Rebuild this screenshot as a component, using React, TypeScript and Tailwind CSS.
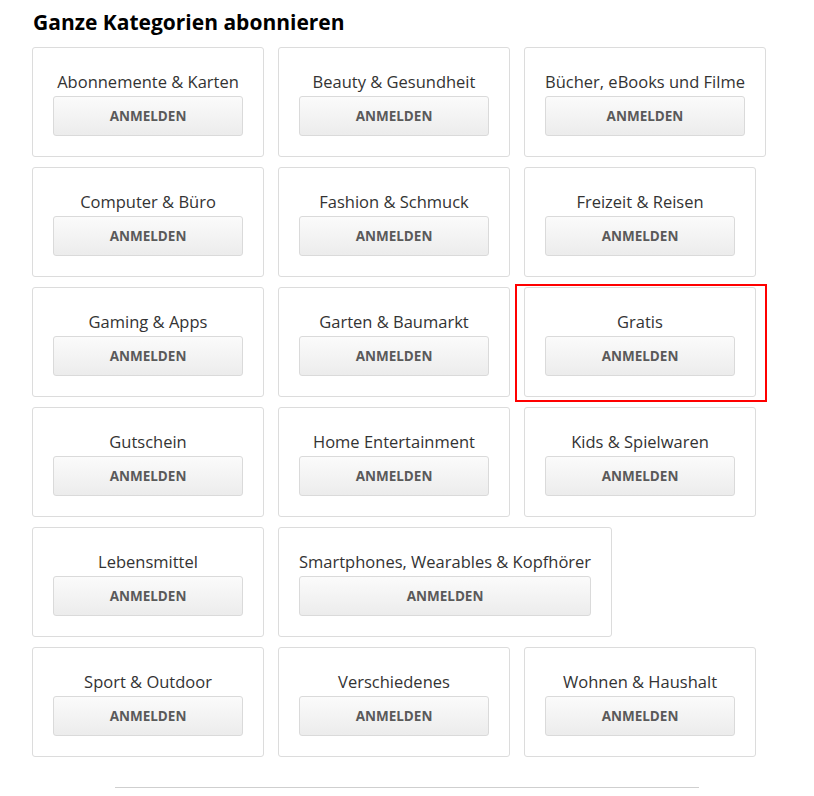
import React from "react";

const cats = [
  "Abonnemente & Karten",
  "Beauty & Gesundheit",
  "Bücher, eBooks und Filme",
  "Computer & Büro",
  "Fashion & Schmuck",
  "Freizeit & Reisen",
  "Gaming & Apps",
  "Garten & Baumarkt",
  "Gratis",
  "Gutschein",
  "Home Entertainment",
  "Kids & Spielwaren",
  "Lebensmittel",
  "Smartphones, Wearables & Kopfhörer",
  "Sport & Outdoor",
  "Verschiedenes",
  "Wohnen & Haushalt",
];

function Card({ name, marked }: { name: string; marked?: boolean }) {
  return (
    <div className="relative">
      <div className="flex flex-col items-stretch rounded-[3px] border border-[#dcdcdc] bg-white px-5 pt-[22px] pb-5 text-center">
        <div className="whitespace-nowrap text-[16.5px] leading-6 text-[#333]">{name}</div>
        <button className="mt-[2px] h-10 min-w-[190px] rounded-[3px] border border-[#dadada] bg-gradient-to-b from-[#fbfbfb] to-[#ececec] pt-px text-[13.5px] font-bold text-[#5a5a5a]">
          ANMELDEN
        </button>
      </div>
      {marked && (
        <div className="pointer-events-none absolute left-[-9px] top-[-3px] right-[-11px] bottom-[-5px] border-2 border-[#f00]" />
      )}
    </div>
  );
}

export default function App() {
  return (
    <div
      className="min-h-[796px] w-[814px] bg-white px-8 pt-2"
      style={{ fontFamily: '"Open Sans", "Noto Sans", sans-serif' }}
    >
      <h2 className="pl-px text-[21px] font-bold leading-7 text-black">Ganze Kategorien abonnieren</h2>
      <div className="mt-[11px] flex flex-wrap gap-x-[14px] gap-y-[10px]">
        {cats.map((c) => (
          <Card key={c} name={c} marked={c === "Gratis"} />
        ))}
      </div>
      <div className="mx-auto mt-[30px] h-px w-[584px] bg-[#cfcfcf]" />
    </div>
  );
}
